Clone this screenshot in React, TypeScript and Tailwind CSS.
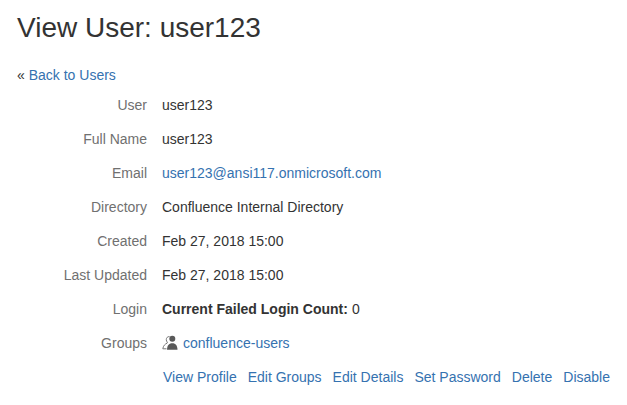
const rows = [
  { label: 'User', value: 'user123' },
  { label: 'Full Name', value: 'user123' },
  { label: 'Email', value: 'user123@ansi117.onmicrosoft.com', link: true },
  { label: 'Directory', value: 'Confluence Internal Directory' },
  { label: 'Created', value: 'Feb 27, 2018 15:00' },
  { label: 'Last Updated', value: 'Feb 27, 2018 15:00' },
];

const actions = ['View Profile', 'Edit Groups', 'Edit Details', 'Set Password', 'Delete', 'Disable'];

function GroupIcon() {
  return (
    <svg width="16" height="16" viewBox="0 0 16 16" className="shrink-0">
      {/* outlined person behind, solid person in front */}
      <path
        d="M7.500 1.500c-2 0-3.200 1.300-3.200 3.100 0 1.100.4 2 1 2.600v.8C3 9.200 1.300 10.500.8 13.800h3.700"
        fill="none"
        stroke="#777"
        strokeWidth="1"
      />
      <circle cx="10.300" cy="3.700" r="3" fill="#595959" />
      <path d="M5 14.800c.1-4.300 1.800-6.600 5.300-6.600s5 2.300 5.200 6.600z" fill="#595959" />
    </svg>
  );
}

function Row({ label, children }: { label: string; children: React.ReactNode }) {
  return (
    <div className="flex h-[34px] items-center">
      <div className="w-[147px] text-right text-[#707070]">{label}</div>
      <div className="ml-[15px] flex items-center text-[#333]">{children}</div>
    </div>
  );
}

export default function App() {
  return (
    <div className="h-[405px] w-[627px] overflow-hidden bg-white pl-[17px] pt-[11px] font-['Liberation_Sans',Arial,sans-serif] text-[14px] text-[#333]">
      <h1 className="text-[28px] leading-[34px] text-[#333]">View User: user123</h1>

      <p className="mt-[20px] h-[20px] leading-[20px]">
        « <a className="text-[#3572b0]">Back to Users</a>
      </p>

      <div className="-ml-[17px] mt-[3px]">
        {rows.map((row) => (
          <Row key={row.label} label={row.label}>
            {row.link ? <a className="text-[#3572b0]">{row.value}</a> : row.value}
          </Row>
        ))}
        <Row label="Login">
          <b className="font-bold">Current Failed Login Count:</b>
          <span className="ml-1">0</span>
        </Row>
        <Row label="Groups">
          <GroupIcon />
          <a className="ml-[5px] text-[#3572b0]">confluence-users</a>
        </Row>
        <div className="ml-[163px] flex h-[34px] items-center gap-[11px] text-[#3572b0]">
          {actions.map((action) => (
            <a key={action}>{action}</a>
          ))}
        </div>
      </div>
    </div>
  );
}
